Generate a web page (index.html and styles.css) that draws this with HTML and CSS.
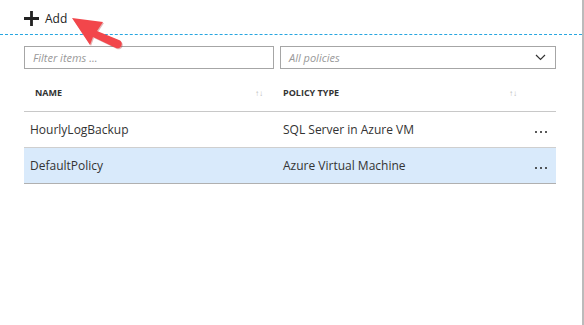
FILE: index.html
```html
<!DOCTYPE html>
<html lang="en">
<head>
    <meta charset="UTF-8">
    <title>Backup policies</title>
    <link rel="stylesheet" href="styles.css">
</head>
<body>
    <div class="blade">
        <div class="toolbar">
            <button type="button" class="cmd">
                <svg class="cmd-icon" width="16" height="16" viewBox="0 0 16 16"><path d="M6.5 0h3v6.5H16v3H9.5V16h-3V9.5H0v-3h6.5z" fill="#222"/></svg>
                Add
            </button>
        </div>

        <div class="content">
            <div class="filters">
                <input type="text" class="filter" placeholder="Filter items ...">
                <div class="select">
                    <span class="select-text">All policies</span>
                    <svg width="11" height="7" viewBox="0 0 11 7"><path d="M1 1l4.5 4.5L10 1" fill="none" stroke="#333" stroke-width="1.2"/></svg>
                </div>
            </div>

            <div class="grid">
                <div class="row head">
                    <div class="cell name">NAME <span class="sort">↑↓</span></div>
                    <div class="cell type">POLICY TYPE <span class="sort">↑↓</span></div>
                    <div class="cell"></div>
                </div>
                <div class="row">
                    <div class="cell">HourlyLogBackup</div>
                    <div class="cell">SQL Server in Azure VM</div>
                    <div class="cell more"><i></i><i></i><i></i></div>
                </div>
                <div class="row selected">
                    <div class="cell">DefaultPolicy</div>
                    <div class="cell">Azure Virtual Machine</div>
                    <div class="cell more"><i></i><i></i><i></i></div>
                </div>
            </div>
        </div>

        <!-- callout pointing at the Add command -->
        <svg class="callout" width="60" height="40" viewBox="0 0 60 40">
            <g transform="translate(1 1)">
                <path d="M0 0 L31 4 L25 13 L47 22 A4 4 0 0 1 44 30 L21 19 L18 27 Z" fill="#b03030" opacity="0.35"/>
            </g>
            <path d="M0 0 L31 4 L25 13 L47 22 A4 4 0 0 1 44 30 L21 19 L18 27 Z" fill="#f2464b"/>
        </svg>
    </div>
</body>
</html>
```

FILE: styles.css
```css
body {
    margin: 0;
    font-family: "Open Sans", "Noto Sans", sans-serif;
    color: #333;
    background-color: #fff;
}
.blade {
    position: relative;
    width: 582px;
    height: 325px;
    border-right: 2px solid #bbb;
}
.toolbar {
    height: 34px;
    border-bottom: 1px dashed #27a6e1;
    padding-left: 24px;
}
.cmd {
    display: flex;
    align-items: center;
    gap: 6px;
    height: 34px;
    padding: 2px 0 0 0;
    border: none;
    background: none;
    font-family: inherit;
    font-size: 12px;
    color: #222;
}
.cmd-icon {
    width: 15px;
    height: 15px;
}
.content {
    padding: 11px 26px 0 24px;
}
.filters {
    display: grid;
    grid-template-columns: 250px 1fr;
    gap: 6px;
}
.filter, .select {
    box-sizing: border-box;
    height: 23px;
    border: 1px solid #a6a6a6;
    font-family: inherit;
    font-size: 11px;
}
.filter {
    width: 100%;
    padding: 0 8px;
    outline: none;
}
.filter::placeholder, .select-text {
    color: #999;
    font-style: italic;
}
.select {
    display: flex;
    align-items: center;
    justify-content: space-between;
    padding: 0 9px 0 8px;
}
.grid {
    font-size: 12px;
}
.row {
    display: grid;
    grid-template-columns: 253px 243px 36px;
    height: 35px;
    border-bottom: 1px solid #cfcfcf;
}
.cell {
    display: flex;
    align-items: center;
    padding-left: 6px;
    white-space: nowrap;
}
.row.head {
    height: 42px;
    border-bottom-color: #c8c8c8;
}
.head .cell {
    padding-top: 4px;
    font-size: 9px;
    font-weight: 700;
    color: #333;
}
.head .cell.name {
    padding-left: 11px;
}
.sort {
    margin-left: auto;
    font-size: 8px;
    font-weight: 400;
    color: #bbb;
}
.head .name .sort {
    margin-right: 14px;
}
.head .type .sort {
    margin-right: 3px;
}
.row.selected {
    background-color: #d9eafb;
    border-bottom-color: #b0b0b0;
}
.more {
    justify-content: center;
    gap: 3px;
    padding: 4px 0 0 6px;
}
.more i {
    width: 2px;
    height: 2px;
    border-radius: 50%;
    background-color: #222;
}
.callout {
    position: absolute;
    left: 72px;
    top: 18px;
}
```
